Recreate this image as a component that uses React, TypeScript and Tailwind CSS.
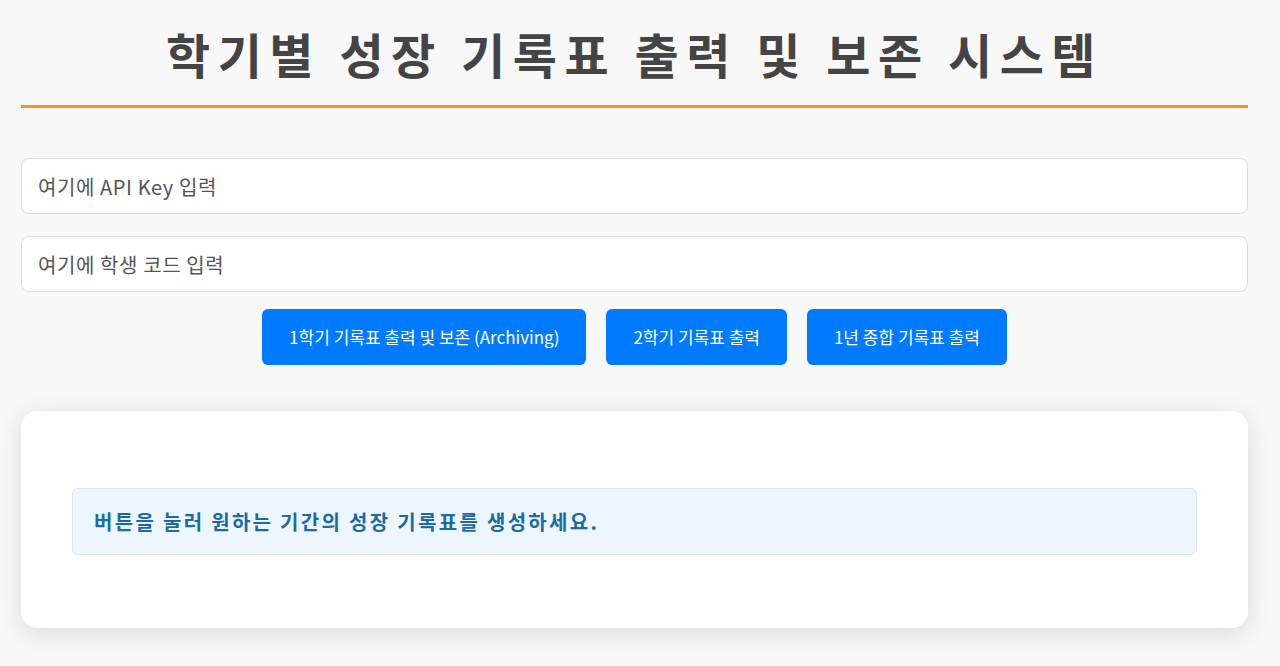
import React from "react";

export default function App() {
  const font = { fontFamily: '"Noto Sans CJK KR", "Noto Sans", "Liberation Sans", sans-serif' };
  return (
    <div className="min-h-[666px] w-full bg-[#f8f8f8] pl-[21px] pr-[32px] pt-0 pb-10" style={font}>
      <h1 className="border-b-[3px] border-[#f39511] pb-[17px] pt-[18px] text-center text-[48px] font-bold leading-[70px] tracking-[7.5px] text-[#444444]">
        학기별 성장 기록표 출력 및 보존 시스템
      </h1>
      <div className="mt-[50px] flex flex-col gap-[22px]">
        <input
          className="h-[56px] w-full rounded-lg border border-[#dddddd] bg-white px-4 text-[20px] tracking-[0.6px] text-[#333] outline-none placeholder:text-[#555555]"
          placeholder="여기에 API Key 입력"
        />
        <input
          className="h-[56px] w-full rounded-lg border border-[#dddddd] bg-white px-4 text-[20px] tracking-[0.6px] text-[#333] outline-none placeholder:text-[#555555]"
          placeholder="여기에 학생 코드 입력"
        />
      </div>
      <div className="mt-[17px] flex justify-center gap-[20px]">
        <button className="h-[56px] rounded-md bg-[#007bff] px-[27px] text-[17px] text-white">
          1학기 기록표 출력 및 보존 (Archiving)
        </button>
        <button className="h-[56px] rounded-md bg-[#007bff] px-[27px] text-[17px] text-white">
          2학기 기록표 출력
        </button>
        <button className="h-[56px] rounded-md bg-[#007bff] px-[27px] text-[17px] text-white">
          1년 종합 기록표 출력
        </button>
      </div>
      <div className="mt-[46px] rounded-2xl bg-white px-[51px] pt-[77px] pb-[73px] shadow-[0_5px_24px_rgba(0,0,0,0.12)]">
        <div className="flex h-[67px] items-center rounded-md border border-[#d3e6f7] bg-[#eef6fd] px-[21px]">
          <p className="text-[20px] font-bold tracking-[2.3px] text-[#1a6aa8]">
            버튼을 눌러 원하는 기간의 성장 기록표를 생성하세요.
          </p>
        </div>
      </div>
    </div>
  );
}
